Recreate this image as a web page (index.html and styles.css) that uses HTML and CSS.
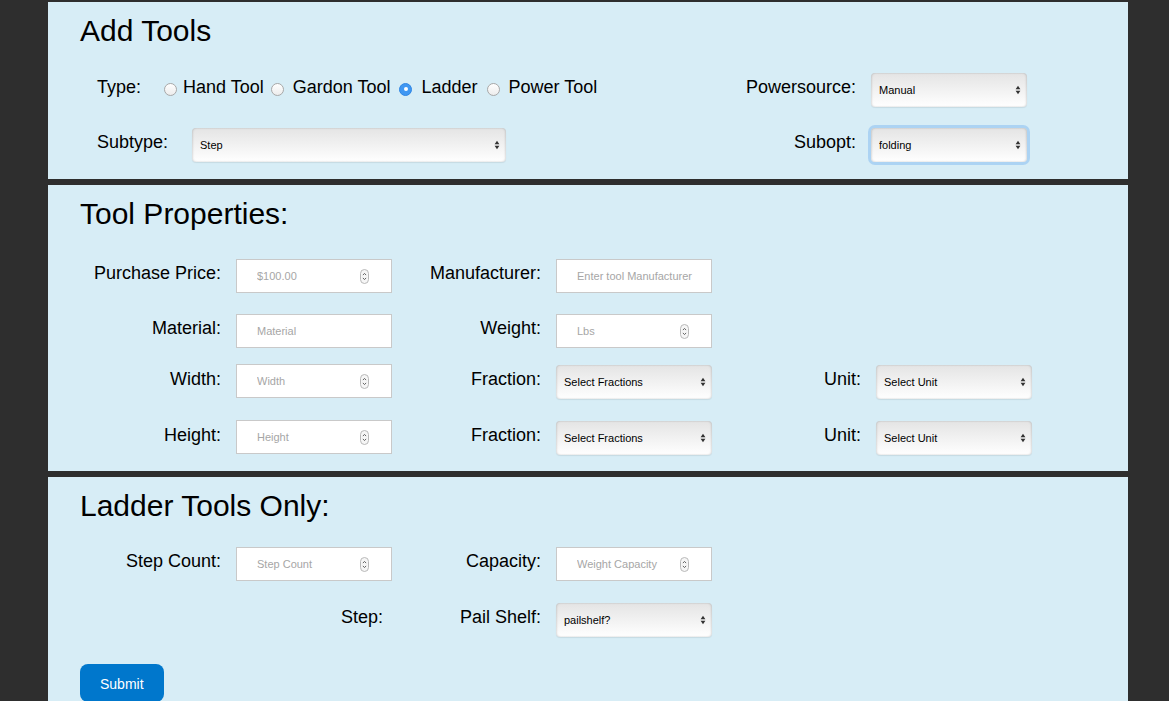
FILE: index.html
```html
<!DOCTYPE html>
<html>
<head>
<meta charset="utf-8">
<title>Add Tools</title>
<link rel="stylesheet" href="styles.css">
</head>
<body>
<div class="page">
  <section class="panel p1">
    <h2>Add Tools</h2>
    <div class="top-grid">
      <span class="lbl type-lbl">Type:</span>
      <div class="radios">
        <label class="radio first"><span class="dot"></span>Hand Tool</label>
        <label class="radio second"><span class="dot"></span>Gardon Tool</label>
        <label class="radio"><span class="dot on"></span>Ladder</label>
        <label class="radio"><span class="dot"></span>Power Tool</label>
      </div>
      <span class="lbl rlbl">Powersource:</span>
      <div class="sel c6"><select><option>Manual</option></select><svg class="arr" width="6" height="10" viewBox="0 0 6 10"><path d="M0.6 4.2 L3 0.8 L5.4 4.2 Z M0.6 5.8 L3 9.2 L5.4 5.8 Z" fill="#333"/></svg></div>
      <span class="lbl subtype-lbl">Subtype:</span>
      <div class="sel wide"><select><option>Step</option></select><svg class="arr" width="6" height="10" viewBox="0 0 6 10"><path d="M0.6 4.2 L3 0.8 L5.4 4.2 Z M0.6 5.8 L3 9.2 L5.4 5.8 Z" fill="#333"/></svg></div>
      <span class="lbl rlbl">Subopt:</span>
      <div class="sel c6 focus"><select><option>folding</option></select><svg class="arr" width="6" height="10" viewBox="0 0 6 10"><path d="M0.6 4.2 L3 0.8 L5.4 4.2 Z M0.6 5.8 L3 9.2 L5.4 5.8 Z" fill="#333"/></svg></div>
    </div>
  </section>

  <section class="panel p2">
    <h2>Tool Properties:</h2>
    <div class="row m-first2">
      <span class="lbl">Purchase Price:</span>
      <div class="field num"><input placeholder="$100.00"><svg class="spin" width="9" height="15" viewBox="0 0 9 15"><rect x="0.5" y="0.5" width="8" height="14" rx="4" fill="#f6f6f6" stroke="#b9b9b9"/><path d="M2.9 6.1 L4.5 4.4 L6.1 6.1 M2.9 8.9 L4.5 10.6 L6.1 8.9" fill="none" stroke="#555" stroke-width="0.9"/></svg></div>
      <span class="lbl">Manufacturer:</span>
      <div class="field"><input placeholder="Enter tool Manufacturer"></div>
    </div>
    <div class="row m21">
      <span class="lbl">Material:</span>
      <div class="field"><input placeholder="Material"></div>
      <span class="lbl">Weight:</span>
      <div class="field num"><input placeholder="Lbs"><svg class="spin" width="9" height="15" viewBox="0 0 9 15"><rect x="0.5" y="0.5" width="8" height="14" rx="4" fill="#f6f6f6" stroke="#b9b9b9"/><path d="M2.9 6.1 L4.5 4.4 L6.1 6.1 M2.9 8.9 L4.5 10.6 L6.1 8.9" fill="none" stroke="#555" stroke-width="0.9"/></svg></div>
    </div>
    <div class="row m16">
      <span class="lbl">Width:</span>
      <div class="field num"><input placeholder="Width"><svg class="spin" width="9" height="15" viewBox="0 0 9 15"><rect x="0.5" y="0.5" width="8" height="14" rx="4" fill="#f6f6f6" stroke="#b9b9b9"/><path d="M2.9 6.1 L4.5 4.4 L6.1 6.1 M2.9 8.9 L4.5 10.6 L6.1 8.9" fill="none" stroke="#555" stroke-width="0.9"/></svg></div>
      <span class="lbl">Fraction:</span>
      <div class="sel low"><select><option>Select Fractions</option></select><svg class="arr" width="6" height="10" viewBox="0 0 6 10"><path d="M0.6 4.2 L3 0.8 L5.4 4.2 Z M0.6 5.8 L3 9.2 L5.4 5.8 Z" fill="#333"/></svg></div>
      <span class="lbl">Unit:</span>
      <div class="sel low"><select><option>Select Unit</option></select><svg class="arr" width="6" height="10" viewBox="0 0 6 10"><path d="M0.6 4.2 L3 0.8 L5.4 4.2 Z M0.6 5.8 L3 9.2 L5.4 5.8 Z" fill="#333"/></svg></div>
    </div>
    <div class="row m21">
      <span class="lbl">Height:</span>
      <div class="field num"><input placeholder="Height"><svg class="spin" width="9" height="15" viewBox="0 0 9 15"><rect x="0.5" y="0.5" width="8" height="14" rx="4" fill="#f6f6f6" stroke="#b9b9b9"/><path d="M2.9 6.1 L4.5 4.4 L6.1 6.1 M2.9 8.9 L4.5 10.6 L6.1 8.9" fill="none" stroke="#555" stroke-width="0.9"/></svg></div>
      <span class="lbl">Fraction:</span>
      <div class="sel low"><select><option>Select Fractions</option></select><svg class="arr" width="6" height="10" viewBox="0 0 6 10"><path d="M0.6 4.2 L3 0.8 L5.4 4.2 Z M0.6 5.8 L3 9.2 L5.4 5.8 Z" fill="#333"/></svg></div>
      <span class="lbl">Unit:</span>
      <div class="sel low"><select><option>Select Unit</option></select><svg class="arr" width="6" height="10" viewBox="0 0 6 10"><path d="M0.6 4.2 L3 0.8 L5.4 4.2 Z M0.6 5.8 L3 9.2 L5.4 5.8 Z" fill="#333"/></svg></div>
    </div>
  </section>

  <section class="panel p3">
    <h2>Ladder Tools Only:</h2>
    <div class="row m-first3">
      <span class="lbl">Step Count:</span>
      <div class="field num"><input placeholder="Step Count"><svg class="spin" width="9" height="15" viewBox="0 0 9 15"><rect x="0.5" y="0.5" width="8" height="14" rx="4" fill="#f6f6f6" stroke="#b9b9b9"/><path d="M2.9 6.1 L4.5 4.4 L6.1 6.1 M2.9 8.9 L4.5 10.6 L6.1 8.9" fill="none" stroke="#555" stroke-width="0.9"/></svg></div>
      <span class="lbl">Capacity:</span>
      <div class="field num"><input placeholder="Weight Capacity"><svg class="spin" width="9" height="15" viewBox="0 0 9 15"><rect x="0.5" y="0.5" width="8" height="14" rx="4" fill="#f6f6f6" stroke="#b9b9b9"/><path d="M2.9 6.1 L4.5 4.4 L6.1 6.1 M2.9 8.9 L4.5 10.6 L6.1 8.9" fill="none" stroke="#555" stroke-width="0.9"/></svg></div>
    </div>
    <div class="row m22">
      <span></span>
      <span class="lbl step-lbl">Step:</span>
      <span class="lbl">Pail Shelf:</span>
      <div class="sel"><select><option>pailshelf?</option></select><svg class="arr" width="6" height="10" viewBox="0 0 6 10"><path d="M0.6 4.2 L3 0.8 L5.4 4.2 Z M0.6 5.8 L3 9.2 L5.4 5.8 Z" fill="#333"/></svg></div>
    </div>
    <button class="submit">Submit</button>
  </section>
</div>
</body>
</html>
```

FILE: styles.css
```css
html, body {
  margin: 0;
  padding: 0;
  background: #2e2e2e;
  font-family: "Liberation Sans", Arial, Helvetica, sans-serif;
  color: #000;
}

.page {
  padding: 2px 0 0 48px;
  width: 1080px;
  display: flex;
  flex-direction: column;
  gap: 6px;
}

.panel {
  background: #d7edf6;
  padding: 12px 0 17px 0;
}
.panel.p2 { padding-bottom: 16px; }

.panel h2 {
  margin: 0 0 0 32px;
  font-size: 30px;
  line-height: 34px;
  font-weight: normal;
}

.lbl {
  font-size: 18px;
  line-height: 21px;
  align-self: center;
  padding-bottom: 5px;
  white-space: nowrap;
}

/* top section */
.top-grid {
  margin-top: 25px;
  padding: 0 101px 0 49px;
  display: grid;
  grid-template-columns: 67px 28px 314px 1fr auto 156px;
  grid-template-rows: 34px 34px;
  row-gap: 21px;
}

.type-lbl { grid-column: 1; grid-row: 1; }
.radios {
  grid-column: 2 / span 3;
  grid-row: 1;
  display: flex;
  align-items: center;
  padding-bottom: 5px;
}
.radio {
  display: inline-flex;
  align-items: center;
  font-size: 18px;
  line-height: 21px;
  white-space: nowrap;
  margin-left: 9px;
}
.radio.first { margin-left: 0; }
.radio.second { margin-left: 7px; }
.dot {
  width: 13px;
  height: 13px;
  box-sizing: border-box;
  border-radius: 50%;
  border: 1px solid #a8a8a8;
  background: linear-gradient(#ffffff, #ececec);
  margin-right: 9px;
  margin-top: 3px;
  display: flex;
  align-items: center;
  justify-content: center;
}
.radio.first .dot { margin-right: 6px; }
.dot.on {
  background: #3f97f2;
  border-color: #2f86e4;
}
.dot.on::after {
  content: "";
  width: 4px;
  height: 4px;
  border-radius: 50%;
  background: #fff;
}

.rlbl {
  grid-column: 5;
  text-align: right;
  padding-right: 15px;
}
.c6 { grid-column: 6; }
.subtype-lbl { grid-column: 1 / span 2; grid-row: 2; }
.wide { grid-column: 3; grid-row: 2; }

/* selects */
.sel {
  height: 34px;
  box-sizing: border-box;
  display: flex;
  align-items: center;
  border-radius: 4px;
  background: linear-gradient(#e4e4e4, #ffffff);
  box-shadow: inset 1px 0 2px rgba(0,0,0,0.12), inset -1px 0 2px rgba(0,0,0,0.12), 0 1px 1px rgba(0,0,0,0.08);
  padding-right: 6px;
}
.sel.focus {
  box-shadow: 0 0 0 3px rgba(120, 180, 240, 0.45), inset 1px 0 2px rgba(0,0,0,0.12), inset -1px 0 2px rgba(0,0,0,0.12);
}
.sel select {
  -webkit-appearance: none;
  appearance: none;
  flex: 1;
  min-width: 0;
  height: 100%;
  border: 0;
  background: transparent;
  outline: none;
  font-family: "Liberation Sans", Arial, Helvetica, sans-serif;
  font-size: 11px;
  color: #000;
  padding: 0 0 0 8px;
  margin: 0;
}
.sel .arr { flex: none; }
.sel.low { margin-top: 1px; }

/* grid rows */
.row {
  display: grid;
  grid-template-columns: 141px 156px 134px 156px 134px 156px;
  column-gap: 15px;
  padding-left: 32px;
}
.row .lbl { text-align: right; }
.m-first2 { margin-top: 28px; }
.m-first3 { margin-top: 24px; }
.m21 { margin-top: 21px; }
.m16 { margin-top: 16px; }
.m22 { margin-top: 22px; }
.row .step-lbl { padding-right: 9px; }

/* inputs */
.field {
  height: 34px;
  box-sizing: border-box;
  border: 1px solid #c9c9c9;
  background: #fff;
  display: flex;
  align-items: center;
}
.field.num { padding-right: 22px; }
.field input {
  flex: 1;
  min-width: 0;
  border: 0;
  outline: none;
  background: transparent;
  font-family: "Liberation Sans", Arial, Helvetica, sans-serif;
  font-size: 11px;
  padding: 0 0 0 20px;
  margin: 0;
  color: #000;
}
.field input::placeholder { color: #a6a6a6; }
.spin { flex: none; }

/* submit */
.submit {
  margin: 27px 0 0 32px;
  display: block;
  background: #0077cc;
  color: #fff;
  border: 0;
  border-radius: 8px;
  font-family: "Liberation Sans", Arial, Helvetica, sans-serif;
  font-size: 14px;
  line-height: 18px;
  padding: 11px 20px 9px;
}
```
